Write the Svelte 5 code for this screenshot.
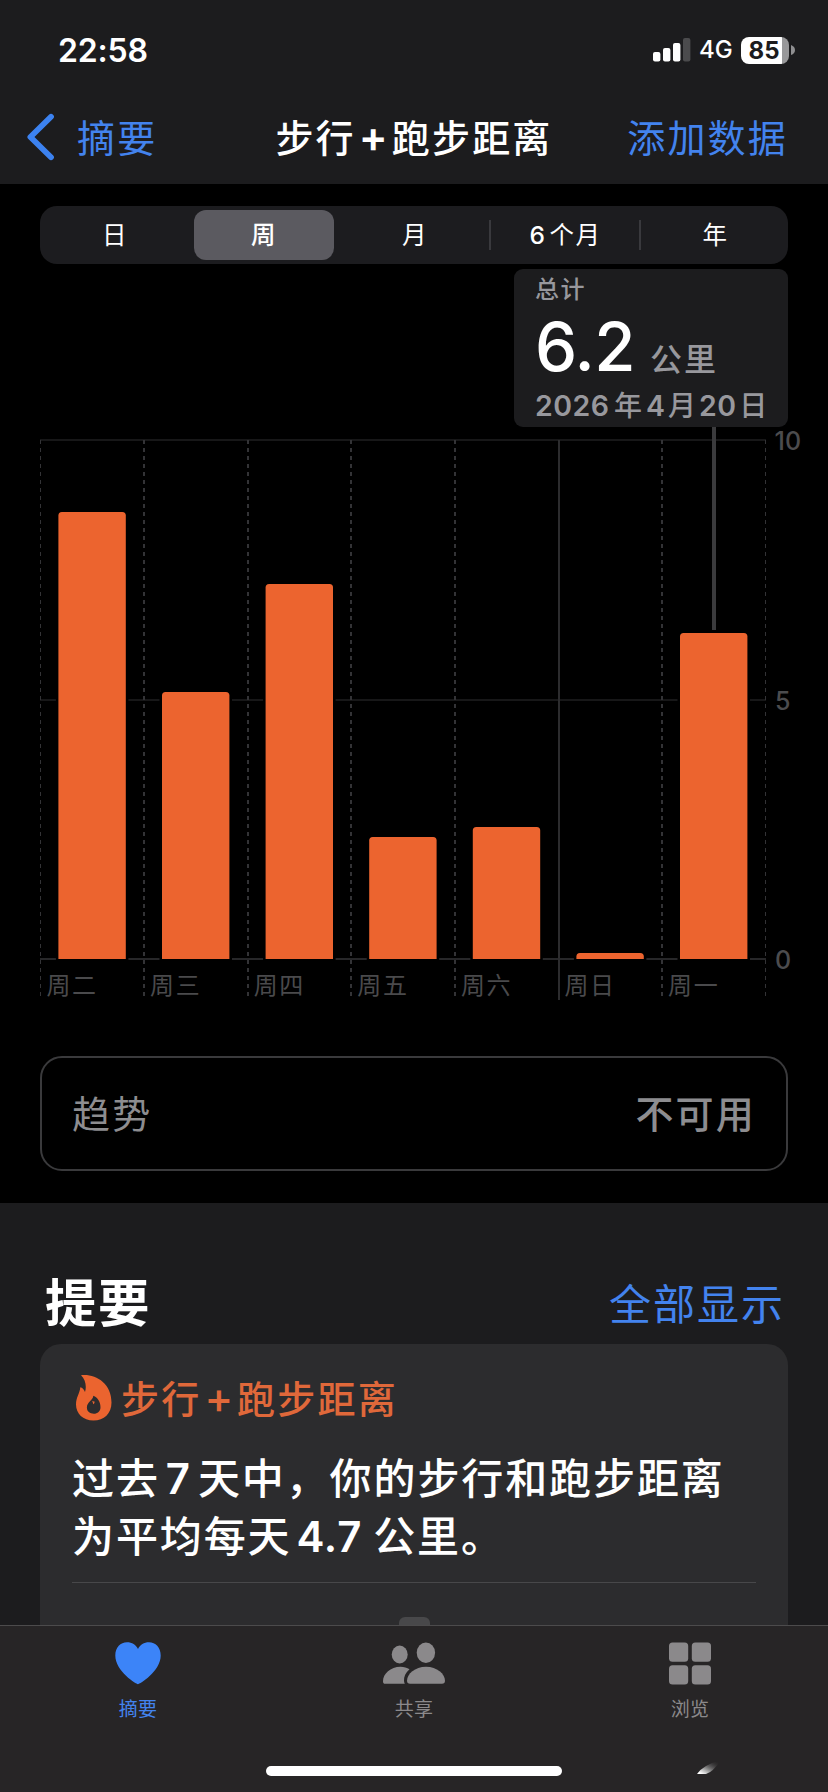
<script>
  const ranges = [
    { text: '日' },
    { text: '周' },
    { text: '月' },
    { num: '6', text: '个月' },
    { text: '年' }
  ];
  const selected = 1;

  const left = 40.5;
  const step = 103.6;
  const days = [
    { label: '周二', h: 447 },
    { label: '周三', h: 267 },
    { label: '周四', h: 375 },
    { label: '周五', h: 122 },
    { label: '周六', h: 132 },
    { label: '周日', h: 6 },
    { label: '周一', h: 326 }
  ];
  // Plot coordinates: the baseline sits at y = 519 inside the 560px tall chart
  const base = 519;
  const barX = (i) => left + i * step + 17.9;
  const barPath = (i, h) => {
    const x = barX(i), y = base - h, w = 67.4, r = 3.5;
    return `M${x} ${base}V${y + r}q0 ${-r} ${r} ${-r}h${w - 2 * r}q${r} 0 ${r} ${r}V${base}z`;
  };
</script>

<div class="screen">
  <header>
    <div class="status">
      <span class="time">22:58</span>
      <div class="right">
        <svg class="signal" width="38" height="24" viewBox="0 0 38 24">
          <rect x="0" y="14" width="7.4" height="9.5" rx="2" fill="#fff" />
          <rect x="10" y="10" width="7.4" height="13.5" rx="2" fill="#fff" />
          <rect x="20" y="5" width="7.4" height="18.5" rx="2" fill="#fff" />
          <rect x="30" y="0" width="7.4" height="23.5" rx="2" fill="#4b4b4d" />
        </svg>
        <span class="net">4G</span>
        <div class="battery"><span>85</span></div>
        <svg class="nub" width="4" height="10" viewBox="0 0 4 10"><path d="M0 0Q4 1.5 4 5T0 10z" fill="#8f8f91" /></svg>
      </div>
    </div>
    <nav class="navbar">
      <div class="back">
        <svg width="28" height="48" viewBox="0 0 28 48">
          <path d="M24 3.800L3.400 24L24 44.200" fill="none" stroke="#3c82f0" stroke-width="5.8" stroke-linecap="round" stroke-linejoin="round" />
        </svg>
        <span>摘要</span>
      </div>
      <h1>步行<i>+</i>跑步距离</h1>
      <span class="add">添加数据</span>
    </nav>
  </header>

  <main>
    <div class="segments">
      {#each ranges as r, i}
        <div class="seg" class:on={i === selected} class:div={i > 2}>{#if r.num}<i>{r.num}</i>{/if}{r.text}</div>
      {/each}
    </div>

    <section class="chart">
      <svg width="828" height="560" viewBox="0 0 828 560">
        <path d="M40 0H766" stroke="#171718" stroke-width="2" />
        <path d="M40 260H766" stroke="#171718" stroke-width="2" />
        <path d="M40 519H766" stroke="#272729" stroke-width="2" />
        {#each Array(8) as _, i}
          {@const x = i === 7 ? 765.5 : i === 0 ? 40.5 : Math.round(left + i * step)}
          <path
            d="M{x} 0V560"
            stroke={i === 5 ? '#2c2c2e' : '#333336'}
            stroke-width={i === 0 || i === 7 ? 1 : 2}
            stroke-dasharray={i === 5 ? 'none' : '4 4'}
          />
        {/each}
        {#each days as d, i}
          <rect x={barX(i) - 2.5} y={base - d.h - 1} width="72.500" height={d.h + 2} fill="#000" />
          <path d={barPath(i, d.h)} fill="#ec642f" />
          <text x={left + i * step + 6} y="553.500" class="day">{d.label}</text>
        {/each}
        <text x="774.5" y="9.5" class="axis">10</text>
        <text x="775" y="269.5" class="axis">5</text>
        <text x="775" y="528.5" class="axis">0</text>
        <path d="M714 -14V190" stroke="#3b3b3d" stroke-width="4" />
      </svg>
      <div class="tip">
        <div class="total">总计</div>
        <div class="value"><b>6.2</b><span>公里</span></div>
        <div class="date">2026<i class="year">年</i>4<i>月</i>20<i>日</i></div>
      </div>
    </section>

    <div class="trend">
      <span>趋势</span>
      <strong>不可用</strong>
    </div>
  </main>

  <section class="lower">
    <div class="heading">
      <h2>提要</h2>
      <span>全部显示</span>
    </div>
    <article class="card">
      <div class="kind">
        <svg width="36" height="46" viewBox="0 0 36 46">
          <path
            fill="#eb642f"
            fill-rule="evenodd"
            d="M5 .3C19-1.500 35.500 8 35.500 27.500C35.500 38.500 28 45.500 17.500 45.500C7 45.500 0 38.500 0 29.500C0 22 3.600 19 4.300 12.200C6.300 12.800 8 14.300 9 17C10.800 11.500 9.500 4.500 5 .3zM17.300 20.800C17 25.500 10.900 27 10.900 32.500C10.900 36.500 13.900 38.700 17.800 38.700C21.600 38.700 24.500 36.300 24.500 32.200C24.500 27.300 21.800 22.500 17.300 20.800zM15.600 25.500C16.600 26.600 17.100 27.800 17.200 29.200C18.200 28.700 18.600 27.600 18.600 26.400C17.600 26.500 16.400 26.200 15.600 25.500z"
          />
        </svg>
        <span>步行<i>+</i>跑步距离</span>
      </div>
      <p>过去<i class="seven">7</i>天中，你的步行和跑步距离<br />为平均每天<i class="avg">4.7</i>公里。</p>
      <div class="peek"><div></div></div>
    </article>
  </section>

  <footer>
    <div class="tab active">
      <svg width="46" height="43" viewBox="0 0 46 43">
        <path d="M23 42.200C21.500 42.200 .3 29.500 .3 13.500C.3 5.500 5.500 .3 12 .3C17 .3 21 2.900 23 7C25 2.900 29 .3 34 .3C40.500 .3 45.700 5.500 45.700 13.500C45.700 29.500 24.500 42.200 23 42.200z" fill="#3c84f8" />
      </svg>
      <span>摘要</span>
    </div>
    <div class="tab">
      <svg width="63" height="42" viewBox="0 0 63 42" fill="#8b898b">
        <ellipse cx="16.700" cy="12" rx="8" ry="9" />
        <ellipse cx="42.900" cy="10.300" rx="9.200" ry="10.200" />
        <path d="M2.200 41.300C.8 41.300 0 40.500 0 38.700C0 31.500 7.500 24.300 17.500 24.300C21 24.300 24 25.200 26.500 26.700C22.500 30 20.800 34.500 21 38C21 39.300 21.300 40.300 21.800 41.300z" />
        <path d="M27 41.300C25 41.300 24 40.300 24 38.300C24 31.500 32 24.300 43 24.300C54 24.300 62 31.500 62 38.300C62 40.300 61 41.300 59 41.300z" />
      </svg>
      <span>共享</span>
    </div>
    <div class="tab">
      <svg width="42" height="42" viewBox="0 0 42 42" fill="#8b898b">
        <rect width="19.200" height="19.200" rx="3.500" />
        <rect x="22.800" width="19.200" height="19.200" rx="3.500" />
        <rect y="22.800" width="19.200" height="19.200" rx="3.500" />
        <rect x="22.800" y="22.800" width="19.200" height="19.200" rx="3.500" />
      </svg>
      <span>浏览</span>
    </div>
    <div class="home"></div>
    <svg class="fleck" width="30" height="20" viewBox="0 0 30 20">
      <defs>
        <linearGradient id="fade" x1="0" y1="1" x2="1" y2="0">
          <stop offset=".1" stop-color="#fff" />
          <stop offset=".4" stop-color="#888" />
          <stop offset=".9" stop-color="#272526" stop-opacity="0" />
        </linearGradient>
      </defs>
      <path d="M2 16Q8 7 26 2Q18 14 11 16z" fill="url(#fade)" />
    </svg>
  </footer>
</div>

<style>
  :global(body) {
    background: #000;
  }
  .screen {
    width: 828px;
    height: 1792px;
    display: flex;
    flex-direction: column;
    overflow: hidden;
    position: relative;
    background: #000;
    color: #fff;
    font-family: Inter, 'Noto Sans CJK SC', sans-serif;
    white-space: nowrap;
  }
  i {
    font-style: normal;
  }
  header {
    height: 184px;
    background: #1c1c1e;
    flex: none;
  }
  .status {
    height: 100px;
    display: flex;
    justify-content: space-between;
    padding: 0 33px 0 58px;
  }
  .time {
    font-size: 32px;
    font-weight: 600;
    line-height: 101px;
    letter-spacing: -.2px;
  }
  .right {
    display: flex;
    align-items: center;
  }
  .signal {
    margin-right: 8px;
  }
  .net {
    font-size: 24px;
    font-weight: 500;
    line-height: 102px;
    width: 42px;
  }
  .battery {
    width: 48px;
    height: 27px;
    border-radius: 8px;
    background: linear-gradient(90deg, #fff 41px, #98989a 41px);
    color: #1c1c1e;
    font-size: 24px;
    font-weight: 700;
    line-height: 27px;
  }
  .battery span {
    display: block;
    width: 46px;
    text-align: center;
  }
  .nub {
    margin-left: 2px;
  }
  .navbar {
    height: 74px;
    display: grid;
    grid-template-columns: 1fr auto 1fr;
    align-items: center;
    padding: 0 27px;
    font-size: 38px;
    line-height: 46px;
    letter-spacing: 2.2px;
    color: #4383ee;
  }
  .back {
    display: flex;
    align-items: center;
    gap: 22px;
  }
  .back span,
  h1,
  .add {
    padding-top: 1px;
  }
  h1 {
    margin: 0;
    color: #fff;
    font-size: 38px;
    font-weight: 500;
  }
  h1 i,
  .kind i {
    margin: 0 4px 0 3px;
    font-size: 43px;
    line-height: 1;
    font-weight: 600;
    letter-spacing: 0;
  }
  .kind i {
    font-weight: 500;
  }
  .add {
    text-align: right;
    margin-right: 13px;
  }
  main {
    height: 1019px;
    flex: none;
    padding-top: 22px;
    box-sizing: border-box;
  }
  .segments {
    width: 748px;
    height: 58px;
    margin: 0 40px;
    border-radius: 17px;
    background: #1c1c1f;
    display: grid;
    grid-template-columns: repeat(5, 150px);
    align-items: center;
  }
  .seg {
    height: 50px;
    line-height: 51px;
    text-align: center;
    font-size: 24.500px;
    font-weight: 400;
    letter-spacing: 1.500px;
  }
  .seg i {
    font-weight: 500;
    margin-right: 3px;
  }
  .seg.on {
    width: 140px;
    margin-left: 4px;
    border-radius: 12px;
    background: #5b5a60;
    font-weight: 500;
  }
  .seg.div {
    height: 30px;
    line-height: 31px;
    margin-left: -1px;
    border-left: 2px solid #39393d;
    box-sizing: border-box;
  }
  .chart {
    position: relative;
    margin-top: 176px;
    height: 560px;
  }
  .chart > svg {
    display: block;
    overflow: visible;
  }
  .day {
    font-size: 24px;
    letter-spacing: 1.600px;
    fill: #4a4a4c;
  }
  .axis {
    font-size: 25px;
    font-weight: 500;
    fill: #4c4c4e;
  }
  .tip {
    position: absolute;
    left: 514px;
    top: -171px;
    width: 274px;
    height: 158px;
    border-radius: 9px;
    background: #1c1c1e;
    padding-left: 21px;
    box-sizing: border-box;
    color: #98989d;
  }
  .total {
    font-size: 24px;
    font-weight: 500;
    letter-spacing: 1.600px;
    line-height: 41px;
    height: 40px;
  }
  .value {
    height: 78px;
    display: flex;
    align-items: baseline;
  }
  .value b {
    color: #fff;
    font-size: 67px;
    line-height: 76px;
    font-weight: 500;
    letter-spacing: -.5px;
    width: 115px;
  }
  .value span {
    font-size: 32px;
    font-weight: 500;
    letter-spacing: 2px;
  }
  .date {
    font-size: 28.500px;
    font-weight: 600;
    line-height: 38px;
    letter-spacing: .5px;
  }
  .date i {
    font-size: 28px;
    font-weight: 500;
    letter-spacing: 0;
    margin: 0 3px 0 2.500px;
  }
  .date i.year {
    margin: 0 4px 0 4.500px;
  }
  .trend {
    width: 748px;
    height: 115px;
    margin: 56px 40px 0;
    box-sizing: border-box;
    border: 2px solid #3a3a3c;
    border-radius: 22px;
    display: flex;
    align-items: center;
    justify-content: space-between;
    padding: 0 30px 5px 30px;
    font-size: 38px;
    letter-spacing: 2.200px;
    color: #8d8d90;
  }
  .trend strong {
    font-weight: 500;
  }
  .lower {
    height: 422px;
    flex: none;
    background: #1c1c1e;
    overflow: hidden;
  }
  .heading {
    height: 141px;
    box-sizing: border-box;
    padding: 56px 43px 0 45px;
    display: flex;
    justify-content: space-between;
    align-items: center;
  }
  h2 {
    margin: 0 0 5px;
    font-size: 51.500px;
    font-weight: 700;
    letter-spacing: 1.600px;
  }
  .heading span {
    color: #4383ee;
    font-size: 42px;
    letter-spacing: 2px;
  }
  .card {
    width: 748px;
    height: 300px;
    margin: 0 40px;
    background: #2c2c2e;
    border-radius: 21px 21px 0 0;
    padding: 31px 32px 0 32px;
    box-sizing: border-box;
  }
  .kind {
    display: flex;
    align-items: center;
    height: 46px;
    padding-left: 4px;
    gap: 9px;
    color: #e0683a;
    font-size: 38px;
    line-height: 44px;
    font-weight: 500;
    letter-spacing: 2.200px;
  }
  .kind span {
    padding-top: 1px;
  }
  p {
    margin: 29px 0 0;
    font-size: 42px;
    line-height: 58px;
    font-weight: 500;
    letter-spacing: 1.900px;
  }
  p i {
    font-weight: 600;
  }
  .seven {
    margin: 0 6px;
  }
  .avg {
    margin: 0 11px 0 5px;
    letter-spacing: .8px;
  }
  .peek {
    height: 43px;
    margin-top: 16px;
    border-top: 1px solid #48484a;
    display: flex;
    justify-content: center;
    align-items: flex-end;
  }
  .peek div {
    width: 31px;
    height: 9px;
    background: #48484a;
    border-radius: 6px 6px 0 0;
  }
  footer {
    position: relative;
    height: 167px;
    box-sizing: border-box;
    border-top: 1px solid #4c4b4c;
    background: #272526;
    display: grid;
    grid-template-columns: repeat(3, 276px);
  }
  .tab {
    display: flex;
    flex-direction: column;
    align-items: center;
    padding-top: 16px;
    color: #8b898b;
  }
  .tab svg {
    height: 43px;
  }
  .tab span {
    margin-top: 12px;
    font-size: 19px;
    line-height: 26px;
    letter-spacing: .3px;
  }
  .tab.active span {
    color: #4383ee;
  }
  .home {
    position: absolute;
    left: 266px;
    top: 140px;
    width: 296px;
    height: 10px;
    border-radius: 5px;
    background: #fff;
  }
  .fleck {
    position: absolute;
    left: 695px;
    top: 132px;
  }
</style>
